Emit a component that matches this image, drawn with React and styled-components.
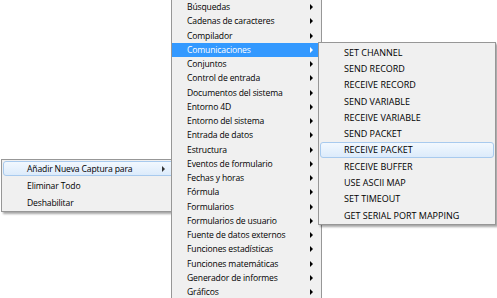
import styled, { createGlobalStyle } from 'styled-components';

const GlobalStyle = createGlobalStyle`
  html, body {
    margin: 0;
    padding: 0;
    background: #fff;
    overflow: hidden;
  }
  body {
    width: 497px;
    height: 298px;
    font-family: "Open Sans", "Noto Sans", sans-serif;
  }
`;

const Stage = styled.div`
  position: relative;
  width: 497px;
  height: 298px;
  overflow: hidden;
  background: #fff;
`;

const Menu = styled.ul`
  position: absolute;
  left: ${p => p.$left}px;
  top: ${p => p.$top}px;
  width: ${p => p.$width}px;
  z-index: ${p => p.$z};
  margin: 0;
  padding: ${p => p.$pad || 0}px;
  list-style: none;
  background: #f0f0f0;
  border: 1px solid #979797;
  box-shadow: ${p => (p.$shadow ? '2px 2px 2px rgba(0,0,0,0.35)' : 'none')};
  box-sizing: border-box;
`;

const Item = styled.li`
  position: relative;
  display: flex;
  align-items: center;
  height: ${p => p.$h}px;
  padding-left: ${p => p.$indent}px;
  padding-right: ${p => p.$right || 8}px;
  font-size: ${p => p.$fs || 9}px;
  letter-spacing: ${p => (p.$fs ? '-0.15px' : '0')};
  color: ${p => (p.$active ? '#fff' : '#000')};
  background: ${p => (p.$active ? '#3399ff' : 'transparent')};
  white-space: nowrap;
  box-sizing: border-box;
`;

const Hover = styled.div`
  position: absolute;
  inset: ${p => p.$inset || '0 1px'};
  border: 1px solid #a8caee;
  border-radius: 3px;
  background: linear-gradient(#f2f8fe, #dcebfb);
`;

const Label = styled.span`
  position: relative;
  flex: 1;
`;

const Arrow = styled.span`
  position: relative;
  width: 0;
  height: 0;
  border-top: 3px solid transparent;
  border-bottom: 3px solid transparent;
  border-left: 3px solid ${p => (p.$light ? '#fff' : p.$soft ? '#333' : '#000')};
`;

const mainItems = [
  'Búsquedas',
  'Cadenas de caracteres',
  'Compilador',
  'Comunicaciones',
  'Conjuntos',
  'Control de entrada',
  'Documentos del sistema',
  'Entorno 4D',
  'Entorno del sistema',
  'Entrada de datos',
  'Estructura',
  'Eventos de formulario',
  'Fechas y horas',
  'Fórmula',
  'Formularios',
  'Formularios de usuario',
  'Fuente de datos externos',
  'Funciones estadísticas',
  'Funciones matemáticas',
  'Generador de informes',
  'Gráficos',
];

const subItems = [
  'SET CHANNEL',
  'SEND RECORD',
  'RECEIVE RECORD',
  'SEND VARIABLE',
  'RECEIVE VARIABLE',
  'SEND PACKET',
  'RECEIVE PACKET',
  'RECEIVE BUFFER',
  'USE ASCII MAP',
  'SET TIMEOUT',
  'GET SERIAL PORT MAPPING',
];

const App = () => {
  return (
    <>
      <GlobalStyle />
      <Stage>
        <Menu $left={1} $top={159} $width={190} $z={1} $shadow>
          <Item $h={17} $indent={25} $fs={8.6}>
            <Hover $inset="1px 1px" />
            <Label>Añadir Nueva Captura para</Label>
            <Arrow $soft style={{ marginRight: 17 }} />
          </Item>
          <Item $h={17} $indent={25} $fs={8.6}>
            <Label>Eliminar Todo</Label>
          </Item>
          <Item $h={17} $indent={25} $fs={8.6}>
            <Label>Deshabilitar</Label>
          </Item>
        </Menu>

        <Menu $left={171} $top={-1} $width={151} $z={2}>
          {mainItems.map(name => (
            <Item key={name} $h={14.25} $indent={15} $fs={8.6} $active={name === 'Comunicaciones'}>
              <Label>{name}</Label>
              <Arrow $light={name === 'Comunicaciones'} />
            </Item>
          ))}
        </Menu>

        <Menu $left={318} $top={42} $width={178} $z={3} $pad={1} $shadow>
          {subItems.map(name => (
            <Item key={name} $h={16.3} $indent={24}>
              {name === 'RECEIVE PACKET' && <Hover $inset="0 0" />}
              <Label>{name}</Label>
            </Item>
          ))}
        </Menu>
      </Stage>
    </>
  );
};

export default App;
